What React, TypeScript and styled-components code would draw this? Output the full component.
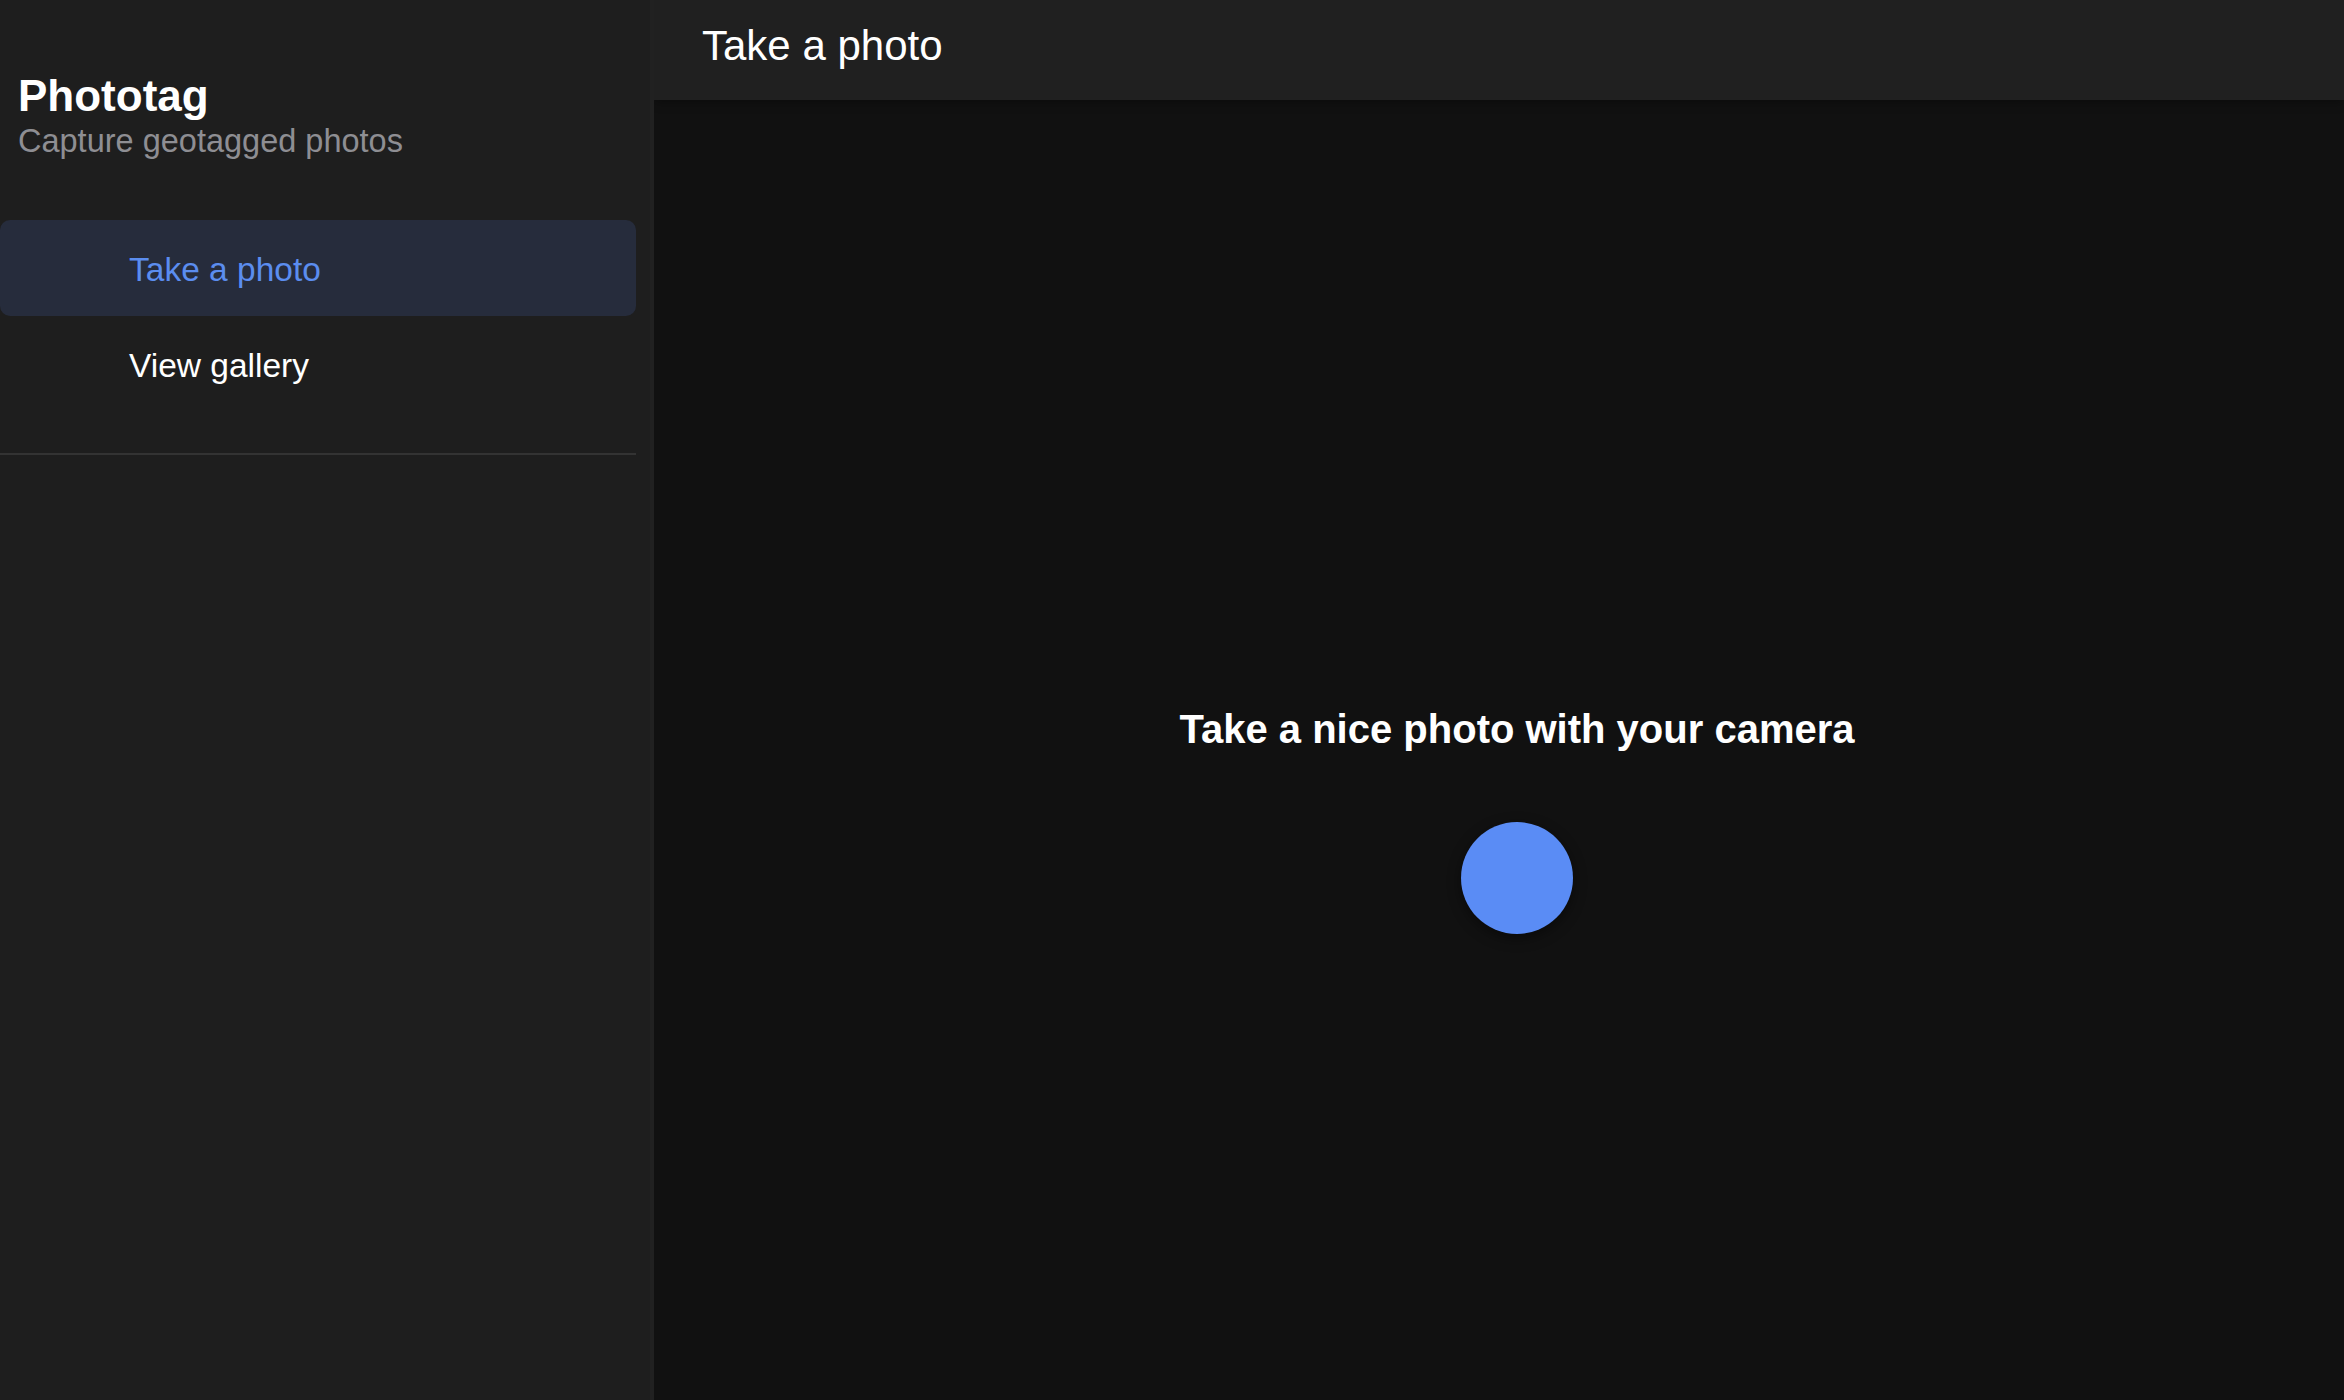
import React from 'react';
import styled, { createGlobalStyle } from 'styled-components';

const GlobalStyle = createGlobalStyle`
  html, body, #root {
    margin: 0;
    padding: 0;
    height: 100%;
  }

  body {
    background: #111111;
    font-family: 'Liberation Sans', Arial, Helvetica, sans-serif;
    color: #ffffff;
    overflow: hidden;
  }
`;

const Layout = styled.div`
  display: flex;
  width: 100%;
  height: 100vh;
`;

const Sidebar = styled.aside`
  flex: 0 0 654px;
  box-sizing: border-box;
  display: flex;
  flex-direction: column;
  padding-right: 14px;
  background: #1e1e1e;
  border-right: 4px solid #212121;
  z-index: 2;
`;

const Brand = styled.div`
  padding: 71px 0 0 18px;
`;

const Title = styled.h1`
  margin: 0;
  font-size: 44px;
  font-weight: 700;
  color: #ffffff;
`;

const Subtitle = styled.p`
  margin: 2px 0 0;
  font-size: 32.5px;
  color: #8e8e93;
`;

const Nav = styled.nav`
  display: flex;
  flex-direction: column;
  margin-top: 60px;
`;

const NavItem = styled.a<{ $active?: boolean }>`
  display: flex;
  align-items: center;
  height: 96px;
  padding: 3px 0 0 129px;
  box-sizing: border-box;
  border-radius: 10px;
  font-size: 33.5px;
  text-decoration: none;
  cursor: pointer;
  color: ${({ $active }) => ($active ? '#5b8def' : '#ffffff')};
  background: ${({ $active }) => ($active ? '#262c3c' : 'transparent')};
`;

const Divider = styled.hr`
  margin: 41px 0 0;
  height: 2px;
  border: none;
  background: #333333;
`;

const Main = styled.main`
  flex: 1;
  display: flex;
  flex-direction: column;
  min-width: 0;
`;

const Header = styled.header`
  height: 100px;
  flex: 0 0 100px;
  box-sizing: border-box;
  padding: 22px 48px 0;
  background: #202020;
  box-shadow: 0 2px 10px rgba(0, 0, 0, 0.35);
  z-index: 1;
`;

const HeaderTitle = styled.h2`
  margin: 0;
  font-size: 42px;
  font-weight: 400;
  color: #ffffff;
`;

const Content = styled.section`
  flex: 1;
  display: flex;
  flex-direction: column;
  align-items: center;
  justify-content: center;
  padding: 140px 0 0 36px;
  background: #111111;
`;

const Prompt = styled.h3`
  margin: 0;
  font-size: 40px;
  font-weight: 700;
  color: #ffffff;
`;

const ShutterButton = styled.button`
  margin-top: 70px;
  width: 112px;
  height: 112px;
  border: none;
  border-radius: 50%;
  background: #5a8cf5;
  box-shadow: 0 4px 14px rgba(0, 0, 0, 0.45);
  cursor: pointer;
`;

export default function App() {
  return (
    <>
      <GlobalStyle />
      <Layout>
        <Sidebar>
          <Brand>
            <Title>Phototag</Title>
            <Subtitle>Capture geotagged photos</Subtitle>
          </Brand>
          <Nav>
            <NavItem $active>Take a photo</NavItem>
            <NavItem>View gallery</NavItem>
          </Nav>
          <Divider />
        </Sidebar>
        <Main>
          <Header>
            <HeaderTitle>Take a photo</HeaderTitle>
          </Header>
          <Content>
            <Prompt>Take a nice photo with your camera</Prompt>
            <ShutterButton aria-label="Take photo" />
          </Content>
        </Main>
      </Layout>
    </>
  );
}
